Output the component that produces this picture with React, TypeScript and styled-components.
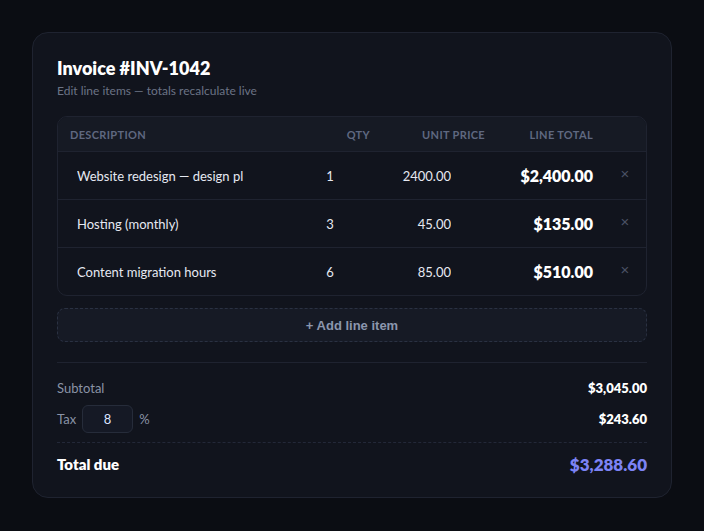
import * as React from 'react'
import styled, { createGlobalStyle } from 'styled-components'

const GlobalStyle = createGlobalStyle`
  html, body {
    margin: 0;
    padding: 0;
    background: #0b0d13;
    font-family: Lato, "Noto Sans", sans-serif;
    color: #e6e9f2;
  }
  * { box-sizing: border-box; }
`

const Page = styled.div`
  padding: 32px;
  min-height: 531px;
`

const Card = styled.div`
  width: 640px;
  background: #11141d;
  border: 1px solid #1f2330;
  border-radius: 16px;
  padding: 24px 24px 22px;
`

const Title = styled.h1`
  margin: 0;
  font-size: 18px;
  line-height: 22px;
  font-weight: 800;
  color: #ffffff;
`

const Subtitle = styled.p`
  margin: 4px 0 0;
  font-size: 12px;
  line-height: 16px;
  color: #6b7385;
`

const Table = styled.div`
  margin-top: 17px;
  border: 1px solid #1f2330;
  border-radius: 10px;
  overflow: hidden;
`

const Row = styled.div<{ $head?: boolean }>`
  display: grid;
  grid-template-columns: 218px 70px 103px 96px 40px;
  column-gap: 12px;
  align-items: center;
  padding-left: 12px;
  height: ${p => (p.$head ? '35px' : '48px')};
  background: ${p => (p.$head ? '#161a24' : 'transparent')};
  border-bottom: 1px solid #1f2330;

  &:last-child {
    border-bottom: none;
    height: 47px;
  }
`

const HeadCell = styled.div<{ $align?: string }>`
  font-size: 11px;
  font-weight: 700;
  letter-spacing: 0.03em;
  text-transform: uppercase;
  color: #5f6880;
  text-align: ${p => p.$align || 'left'};
`

const CellInput = styled.input<{ $align?: string; $w?: string }>`
  width: ${p => p.$w || '100%'};
  height: 30px;
  padding: 0 6px;
  background: transparent;
  border: 1px solid transparent;
  border-radius: 6px;
  color: #e6e9f2;
  font-family: inherit;
  font-size: 13px;
  text-align: ${p => p.$align || 'left'};
  outline: none;

  &:focus {
    border-color: #2d3446;
    background: #151925;
  }
`

const LineTotal = styled.div`
  text-align: right;
  font-size: 16px;
  font-weight: 800;
  color: #ffffff;
`

const RemoveButton = styled.button`
  background: none;
  border: none;
  color: #4a5164;
  font-size: 15px;
  line-height: 1;
  cursor: pointer;
  padding: 0 0 4px;
  justify-self: center;
`

const AddButton = styled.button`
  display: block;
  width: 100%;
  height: 34px;
  margin-top: 12px;
  background: #161a25;
  border: 1px dashed #2a3142;
  border-radius: 8px;
  color: #8b96ad;
  font-family: "Liberation Sans Narrow", "Liberation Sans", sans-serif;
  font-size: 13px;
  font-weight: 700;
  cursor: pointer;
`

const Summary = styled.div`
  margin-top: 20px;
  border-top: 1px solid #1f2330;
  padding-top: 15px;
`

const SumRow = styled.div`
  display: flex;
  align-items: center;
  justify-content: space-between;
  min-height: 20px;
  & + & {
    margin-top: 7px;
  }
`

const SumLabel = styled.div`
  display: flex;
  align-items: center;
  gap: 6px;
  font-size: 13px;
  color: #8a93a6;
`

const SumValue = styled.div`
  font-size: 13px;
  font-weight: 800;
  color: #ffffff;
`

const TaxInput = styled.input`
  width: 51px;
  height: 28px;
  background: #151925;
  border: 1px solid #262c3a;
  border-radius: 6px;
  color: #dbe4ff;
  font-family: inherit;
  font-size: 13px;
  text-align: center;
  outline: none;
`

const TotalRow = styled.div`
  display: flex;
  align-items: center;
  justify-content: space-between;
  margin-top: 9px;
  padding-top: 10px;
  border-top: 1px dashed #232838;
  height: 22px;
  box-sizing: content-box;
`

const TotalLabel = styled.div`
  font-size: 15px;
  font-weight: 800;
  color: #ffffff;
`

const TotalValue = styled.div`
  font-size: 17px;
  font-weight: 800;
  color: #7c83f5;
`

type Item = { id: number; desc: string; qty: number; price: number }

const money = (n: number) =>
  '$' + n.toLocaleString('en-US', { minimumFractionDigits: 2, maximumFractionDigits: 2 })

const App = () => {
  const [items, setItems] = React.useState<Item[]>([
    { id: 1, desc: 'Website redesign — design plan', qty: 1, price: 2400 },
    { id: 2, desc: 'Hosting (monthly)', qty: 3, price: 45 },
    { id: 3, desc: 'Content migration hours', qty: 6, price: 85 },
  ])
  const [tax, setTax] = React.useState(8)

  const update = (id: number, patch: Partial<Item>) =>
    setItems(list => list.map(it => (it.id === id ? { ...it, ...patch } : it)))

  const subtotal = items.reduce((s, it) => s + it.qty * it.price, 0)
  const taxAmount = (subtotal * tax) / 100

  return (
    <Page>
      <GlobalStyle />
      <Card>
        <Title>Invoice #INV-1042</Title>
        <Subtitle>Edit line items — totals recalculate live</Subtitle>

        <Table>
          <Row $head>
            <HeadCell>Description</HeadCell>
            <HeadCell $align='right'>Qty</HeadCell>
            <HeadCell $align='right'>Unit price</HeadCell>
            <HeadCell $align='right'>Line total</HeadCell>
            <div />
          </Row>
          {items.map(it => (
            <Row key={it.id}>
              <CellInput
                $w='180px'
                value={it.desc}
                onChange={e => update(it.id, { desc: e.target.value })}
              />
              <CellInput
                $w='60px'
                $align='center'
                value={it.qty}
                onChange={e => update(it.id, { qty: Number(e.target.value) || 0 })}
              />
              <CellInput
                $w='76px'
                $align='right'
                value={it.price.toFixed(2)}
                onChange={e => update(it.id, { price: Number(e.target.value) || 0 })}
              />
              <LineTotal>{money(it.qty * it.price)}</LineTotal>
              <RemoveButton onClick={() => setItems(list => list.filter(x => x.id !== it.id))}>
                ×
              </RemoveButton>
            </Row>
          ))}
        </Table>

        <AddButton
          onClick={() =>
            setItems(list => [...list, { id: Date.now(), desc: 'New item', qty: 1, price: 0 }])
          }
        >
          + Add line item
        </AddButton>

        <Summary>
          <SumRow>
            <SumLabel>Subtotal</SumLabel>
            <SumValue>{money(subtotal)}</SumValue>
          </SumRow>
          <SumRow>
            <SumLabel>
              Tax
              <TaxInput value={tax} onChange={e => setTax(Number(e.target.value) || 0)} />
              %
            </SumLabel>
            <SumValue>{money(taxAmount)}</SumValue>
          </SumRow>
          <TotalRow>
            <TotalLabel>Total due</TotalLabel>
            <TotalValue>{money(subtotal + taxAmount)}</TotalValue>
          </TotalRow>
        </Summary>
      </Card>
    </Page>
  )
}

export default App
